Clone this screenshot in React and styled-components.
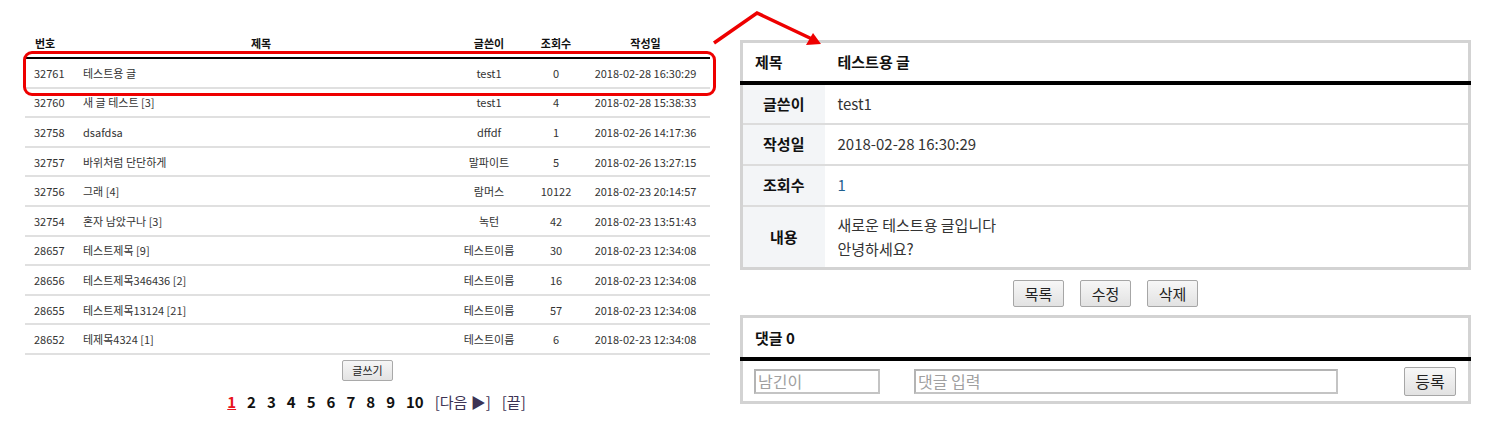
import React from "react";
import styled, { createGlobalStyle } from "styled-components";

const Global = createGlobalStyle`
  html, body { margin: 0; padding: 0; background: #fff; }
  body { font-family: "Noto Sans CJK KR", "Noto Sans", sans-serif; color: #333; }
  * { box-sizing: border-box; }
`;

const Page = styled.div`
  position: relative;
  width: 1492px;
  height: 447px;
  display: flex;
  align-items: flex-start;
`;

const Left = styled.section`
  margin-left: 25px;
  margin-top: 29px;
  width: 685px;
  display: flex;
  flex-direction: column;
  align-items: center;
`;

const ListTable = styled.table`
  width: 685px;
  border-collapse: collapse;
  table-layout: fixed;
  font-size: 11px;
`;

const Th = styled.th`
  height: 29px;
  padding: 0 ${(p) => (p.$left ? "10px" : "0")};
  text-align: ${(p) => (p.$left ? "left" : "center")};
  font-weight: bold;
  color: #111;
  border-bottom: 2px solid #000;
  line-height: 14px;
`;

const Tr = styled.tr`
  border-bottom: 2px solid #e0e0e0;
`;

const Td = styled.td`
  height: 29.6px;
  padding: 0 ${(p) => p.$pad || "0"};
  text-align: ${(p) => p.$align || "center"};
  color: #333;
  line-height: 14px;
  white-space: nowrap;
`;

const SmallButton = styled.button`
  margin-top: 5px;
  width: 51px;
  height: 21px;
  padding: 0;
  font-family: inherit;
  font-size: 11px;
  color: #222;
  background: linear-gradient(#f6f6f6, #e3e3e3);
  border: 1px solid #a9a9a9;
  border-radius: 2px;
`;

const Pager = styled.nav`
  margin-top: 11px;
  margin-left: 18px;
  display: flex;
  align-items: center;
  gap: 11px;
  font-size: 15px;
  line-height: 20px;
`;

const PageNum = styled.a`
  font-weight: bold;
  color: ${(p) => (p.$current ? "#e8141b" : "#111")};
  text-decoration: ${(p) => (p.$current ? "underline" : "none")};
`;

const PageText = styled.a`
  color: #3c3354;
  text-decoration: none;
`;

const Right = styled.section`
  margin-left: 30px;
  margin-top: 40px;
  width: 731px;
  display: flex;
  flex-direction: column;
  align-items: stretch;
`;

const DetailTable = styled.table`
  width: 731px;
  border-collapse: collapse;
  table-layout: fixed;
  border: 3px solid #d3d3d3;
  font-size: 15px;
`;

const DRow = styled.tr`
  border-bottom: 2px solid #dcdcdc;
`;

const HeadRow = styled.tr`
  border-bottom: 4px solid #000;
`;

const Label = styled.th`
  width: 83px;
  height: ${(p) => p.$h || "41px"};
  background: ${(p) => (p.$plain ? "#fff" : "#f3f5f7")};
  text-align: ${(p) => (p.$plain ? "left" : "center")};
  padding: 0 0 0 ${(p) => (p.$plain ? "12px" : "0")};
  font-weight: bold;
  color: #111;
  line-height: 20px;
`;

const Value = styled.td`
  padding: 0 0 0 13px;
  font-weight: ${(p) => (p.$bold ? "bold" : "normal")};
  color: ${(p) => p.$color || (p.$bold ? "#111" : "#333")};
  line-height: 24px;
`;

const ButtonRow = styled.div`
  margin-top: 10px;
  display: flex;
  justify-content: center;
  gap: 16px;
`;

const Button = styled.button`
  width: 51px;
  height: 27px;
  padding: 0;
  font-family: inherit;
  font-size: 15px;
  color: #222;
  background: linear-gradient(#f7f7f7, #e2e2e2);
  border: 1px solid #a6a6a6;
  border-radius: 2px;
`;

const CommentBox = styled.div`
  margin-top: 8px;
  border: 3px solid #d3d3d3;
  display: flex;
  flex-direction: column;
`;

const CommentHead = styled.div`
  height: 43px;
  display: flex;
  align-items: center;
  font-size: 15px;
  font-weight: bold;
  color: #111;
  border-bottom: 4px solid #000;
  margin: 0 -3px;
  padding-left: 15px;
`;

const CommentForm = styled.div`
  height: 40px;
  display: flex;
  align-items: center;
  padding: 0 12px 0 11px;
`;

const Input = styled.input`
  width: ${(p) => p.$w};
  height: 25px;
  margin-right: ${(p) => p.$mr || "0"};
  padding: 0 2px;
  font-family: inherit;
  font-size: 16px;
  border: 2px solid #c4c4c4;
  border-top-color: #b4b4b4;
  border-left-color: #b4b4b4;
  outline: none;
  &::placeholder { color: #a0a0a0; }
`;

const Submit = styled(Button)`
  margin-left: auto;
  width: 52px;
  height: 29px;
  font-size: 16px;
`;

const Highlight = styled.div`
  position: absolute;
  left: 23px;
  top: 51px;
  width: 693px;
  height: 45px;
  border: 3.5px solid #ee0000;
  border-radius: 9px;
  pointer-events: none;
`;

const Arrow = styled.svg`
  position: absolute;
  left: 700px;
  top: 0;
  pointer-events: none;
`;

const rows = [
  ["32761", "테스트용 글", "test1", "0", "2018-02-28 16:30:29"],
  ["32760", "새 글 테스트 [3]", "test1", "4", "2018-02-28 15:38:33"],
  ["32758", "dsafdsa", "dffdf", "1", "2018-02-26 14:17:36"],
  ["32757", "바위처럼 단단하게", "말파이트", "5", "2018-02-26 13:27:15"],
  ["32756", "그래 [4]", "람머스", "10122", "2018-02-23 20:14:57"],
  ["32754", "혼자 남았구나 [3]", "녹턴", "42", "2018-02-23 13:51:43"],
  ["28657", "테스트제목 [9]", "테스트이름", "30", "2018-02-23 12:34:08"],
  ["28656", "테스트제목346436 [2]", "테스트이름", "16", "2018-02-23 12:34:08"],
  ["28655", "테스트제목13124 [21]", "테스트이름", "57", "2018-02-23 12:34:08"],
  ["28652", "테제목4324 [1]", "테스트이름", "6", "2018-02-23 12:34:08"],
];

export default function App() {
  return (
    <>
      <Global />
      <Page>
        <Left>
          <ListTable>
            <colgroup>
              <col style={{ width: 50 }} />
              <col style={{ width: 372 }} />
              <col style={{ width: 84 }} />
              <col style={{ width: 50 }} />
              <col style={{ width: 129 }} />
            </colgroup>
            <thead>
              <tr>
                <Th $left>번호</Th>
                <Th>제목</Th>
                <Th>글쓴이</Th>
                <Th>조회수</Th>
                <Th>작성일</Th>
              </tr>
            </thead>
            <tbody>
              {rows.map((r) => (
                <Tr key={r[0]}>
                  <Td $align="left" $pad="9px">{r[0]}</Td>
                  <Td $align="left" $pad="8px">{r[1]}</Td>
                  <Td>{r[2]}</Td>
                  <Td>{r[3]}</Td>
                  <Td>{r[4]}</Td>
                </Tr>
              ))}
            </tbody>
          </ListTable>
          <SmallButton>글쓰기</SmallButton>
          <Pager>
            <PageNum $current>1</PageNum>
            {[2, 3, 4, 5, 6, 7, 8, 9, 10].map((n) => (
              <PageNum key={n}>{n}</PageNum>
            ))}
            <PageText>[다음 ▶]</PageText>
            <PageText>[끝]</PageText>
          </Pager>
        </Left>
        <Right>
          <DetailTable>
            <tbody>
              <HeadRow>
                <Label $plain $h="41px">제목</Label>
                <Value $bold>테스트용 글</Value>
              </HeadRow>
              <DRow>
                <Label>글쓴이</Label>
                <Value>test1</Value>
              </DRow>
              <DRow>
                <Label>작성일</Label>
                <Value>2018-02-28 16:30:29</Value>
              </DRow>
              <DRow>
                <Label>조회수</Label>
                <Value $color="#1f5f8f">1</Value>
              </DRow>
              <DRow>
                <Label $h="63px">내용</Label>
                <Value>
                  새로운 테스트용 글입니다
                  <br />
                  안녕하세요?
                </Value>
              </DRow>
            </tbody>
          </DetailTable>
          <ButtonRow>
            <Button>목록</Button>
            <Button>수정</Button>
            <Button>삭제</Button>
          </ButtonRow>
          <CommentBox>
            <CommentHead>댓글 0</CommentHead>
            <CommentForm>
              <Input $w="126px" $mr="34px" placeholder="남긴이" />
              <Input $w="424px" placeholder="댓글 입력" />
              <Submit>등록</Submit>
            </CommentForm>
          </CommentBox>
        </Right>
        <Highlight />
        <Arrow width="140" height="60" viewBox="0 0 140 60">
          <polyline points="14,43 57,13 112,39" fill="none" stroke="#ee0000" strokeWidth="3.5" strokeLinejoin="miter" />
          <polygon points="121,44 106,45 113,33" fill="#ee0000" />
        </Arrow>
      </Page>
    </>
  );
}
